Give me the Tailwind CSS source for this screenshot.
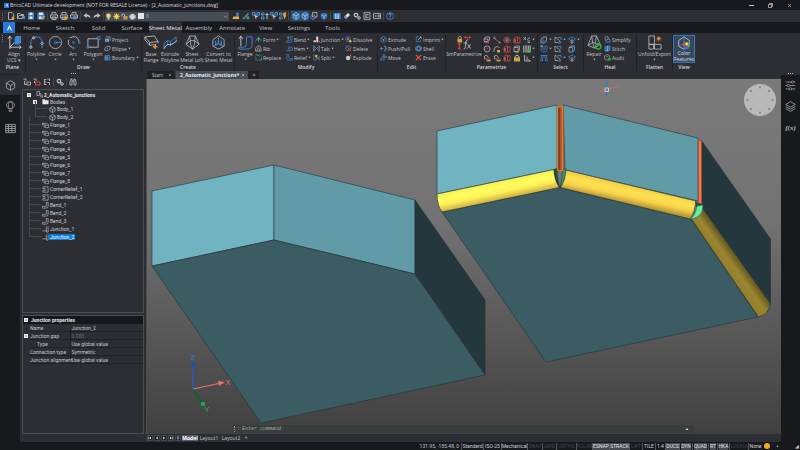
<!DOCTYPE html>
<html lang="en">
<head>
    <meta charset="UTF-8">
    <meta name="viewport" content="width=device-width, initial-scale=1.0">
    <title>BricsCAD Ultimate development</title>
    <script src="https://cdn.jsdelivr.net/npm/@tailwindcss/browser@4"></script>
</head>
<body class="h-screen flex flex-col overflow-hidden bg-[#17191d] text-[#c4c6c9] text-[5px] leading-[6px] font-['Open_Sans',sans-serif] whitespace-nowrap">

    <!-- Icon sprite -->
    <svg class="hidden" fill="none" stroke="currentColor">
        <symbol id="caret" viewBox="0 0 8 8"><path d="M1 2h6L4 6z" fill="currentColor" stroke="none"/></symbol>
        <symbol id="x" viewBox="0 0 16 16"><path d="M3 3l10 10M13 3L3 13" stroke-width="2"/></symbol>
        <symbol id="plus" viewBox="0 0 16 16"><path d="M8 2v12M2 8h12" stroke-width="2"/></symbol>
        <symbol id="logo" viewBox="0 0 16 16"><path d="M8 2l6 12H11L8 8 5 14H2z" fill="#fff" stroke="none"/></symbol>
        <symbol id="new" viewBox="0 0 16 16"><path d="M3 1h7l3 3v11H3z" stroke-width="1.6"/><circle cx="12" cy="12" r="3" fill="#e6a53a" stroke="none"/></symbol>
        <symbol id="open" viewBox="0 0 16 16"><path d="M1 13V3h5l2 2h5v3M1 13l3-6h8l-2 6z" stroke-width="1.6"/><path d="M11 8h5v6h-5z" fill="#4a90d9" stroke="none"/></symbol>
        <symbol id="save" viewBox="0 0 16 16"><path d="M2 1h12v14H2z" fill="#3f86d0" stroke="none"/><path d="M5 1h6v5H5zM5 9h6v5H5z" fill="#dde3ea" stroke="none"/></symbol>
        <symbol id="saveas" viewBox="0 0 16 16"><path d="M1 1h14v14H1z" fill="#3f86d0" stroke="none"/><path d="M4 1h8v5H4zM4 9h5v5H4z" fill="#dde3ea" stroke="none"/><path d="M9 15l6-7" stroke="#e6a53a" stroke-width="3"/></symbol>
        <symbol id="print" viewBox="0 0 16 16"><path d="M4 6V1h8v5M1 6h14v6H1zM4 10h8v5H4z" stroke-width="1.6"/></symbol>
        <symbol id="printo" viewBox="0 0 16 16"><path d="M4 6V1h8v5M1 6h14v6H1zM4 10h8v5H4z" stroke-width="1.6"/><path d="M9 9h6v6H9z" fill="#e6a53a" stroke="none"/></symbol>
        <symbol id="printb" viewBox="0 0 16 16"><path d="M4 6V1h8v5M1 6h14v6H1z" stroke-width="1.6"/><circle cx="10" cy="11" r="4" fill="#4a90d9" stroke="none"/></symbol>
        <symbol id="undo" viewBox="0 0 16 16"><path d="M1 7l6-5v3c5 0 8 3 8 8-2-3-4-4-8-4v3z" fill="currentColor" stroke="none"/></symbol>
        <symbol id="redo" viewBox="0 0 16 16"><path d="M15 7L9 2v3c-5 0-8 3-8 8 2-3 4-4 8-4v3z" fill="currentColor" stroke="none"/></symbol>
        <symbol id="bulb" viewBox="0 0 16 16"><circle cx="8" cy="6" r="5" fill="#ffd95e" stroke="none"/><path d="M6 10h4v5H6z" fill="#d8d8d8" stroke="none"/></symbol>
        <symbol id="sun" viewBox="0 0 16 16"><path d="M8 0v16M0 8h16M2 2l12 12M14 2L2 14" stroke="#ffc93c" stroke-width="1.5"/><circle cx="8" cy="8" r="5" fill="#ffd23f" stroke="none"/></symbol>
        <symbol id="unlock" viewBox="0 0 16 16"><path d="M2 8V4q3-4 6 0v4" stroke-width="2"/><path d="M5 7h10v8H5z" fill="#c69550" stroke="none"/></symbol>
        <symbol id="printfill" viewBox="0 0 16 16"><path d="M4 2h8v3h3v7h-3v3H4v-3H1V5h3z" fill="#d0d3d6" stroke="none"/></symbol>
        <symbol id="lock" viewBox="0 0 16 16"><path d="M4 8V5q4-6 8 0v3" stroke-width="2"/><path d="M2 7h12v8H2z" fill="#d1a43f" stroke="none"/></symbol>
        <symbol id="chev" viewBox="0 0 16 16"><path d="M3 5l5 6 5-6" stroke-width="1.5"/></symbol>
        <symbol id="brush" viewBox="0 0 16 16"><path d="M9 1h4v8H9z" fill="#4a90d9" stroke="none"/><path d="M3 9h11v5H1z" fill="#e8b04a" stroke="none"/></symbol>
        <symbol id="pick" viewBox="0 0 16 16"><path d="M2 14L13 3" stroke="#4a90d9" stroke-width="3"/><path d="M12 8v7M8 12h7" stroke="#5cb85c" stroke-width="2"/></symbol>
        <symbol id="sel" viewBox="0 0 16 16"><path d="M1 1h5v5H1zM10 1h5v5h-5z" stroke="#4a90d9" stroke-width="2"/><path d="M4 5l9 4-4 1-1 5z" fill="currentColor" stroke="none"/></symbol>
        <symbol id="sel2" viewBox="0 0 16 16"><path d="M1 2h5v4H1zM1 10h5v4H1z" stroke="#4a90d9" stroke-width="2"/><path d="M12 2v12M9 5h6" stroke-width="2"/></symbol>
        <symbol id="sel3" viewBox="0 0 16 16"><path d="M1 2h5v4H1zM1 10h5v4H1z" stroke="#4a90d9" stroke-width="2"/><path d="M9 1h6l-2 6h2l-5 8v-6H8z" fill="#f0a830" stroke="none"/></symbol>
        <symbol id="cube" viewBox="0 0 16 16"><path d="M8 1l6 3.5v7L8 15l-6-3.5v-7zM2 4.5L8 8l6-3.5M8 8v7" stroke-width="1.3"/></symbol>
        <symbol id="cubeb" viewBox="0 0 16 16"><path d="M8 1l6 3.5v7L8 15l-6-3.5v-7z" fill="#2e6fb7" stroke="#8fbfe8" stroke-width="1.3"/><path d="M2 4.5L8 8l6-3.5M8 8v7" stroke="#cfe3f5" stroke-width="1.3"/></symbol>
        <symbol id="cubes" viewBox="0 0 16 16"><path d="M5 1h9v9H5z" stroke-width="1.5"/><circle cx="6" cy="10" r="4.5" stroke="#4a90d9" stroke-width="2"/></symbol>
        <symbol id="sphere" viewBox="0 0 16 16"><circle cx="8" cy="8" r="6.5" fill="#2e6fb7" stroke="none"/><path d="M2 5l6 4 6-4M8 9v6" stroke-width="1.5"/></symbol>
        <symbol id="cols" viewBox="0 0 16 16"><path d="M1 2h14v12H1z" fill="#3f86d0" stroke="none"/><path d="M5 4v10M8 4v10M11 4v10" stroke="#dde3ea" stroke-width="1.3"/></symbol>
        <symbol id="eraser" viewBox="0 0 16 16"><path d="M2 10l8-8 4 4-8 8z" fill="#d8e2ee" stroke="none"/><path d="M2 10l3-3 4 4-3 3z" fill="#4a90d9" stroke="none"/></symbol>
        <symbol id="gear" viewBox="0 0 16 16"><circle cx="6" cy="6" r="3.5" stroke-width="2.5"/><circle cx="12" cy="12" r="2.5" stroke-width="2"/></symbol>
        <symbol id="list" viewBox="0 0 16 16"><path d="M2 1h12v14H2z" stroke-width="1.5"/><path d="M4 5h8M4 8h5M4 11h8" stroke-width="1.5"/></symbol>
        <symbol id="term" viewBox="0 0 16 16"><path d="M1 3h14v10H1z" stroke-width="1.5"/><path d="M4 6l3 2-3 2M10 6h3v4h-3z" stroke-width="1.3"/></symbol>
        <symbol id="help" viewBox="0 0 16 16"><circle cx="8" cy="8" r="7" stroke="#3f86d0" stroke-width="1.6"/><path d="M5.500 6q0-3 2.500-3t2.500 2.500q0 1-2.500 3v1M8 11v2" stroke="#7db5ec" stroke-width="1.6"/></symbol>
        <symbol id="ucs" viewBox="0 0 16 16"><path d="M3 15V2M1 4l2-3 2 3M3 13h12M13 11l2 2-2 2M3 13l5-5" stroke-width="1"/><path d="M8 3l2-2h5v7l-2 2H8z" fill="#3f86d0" stroke="none"/></symbol>
        <symbol id="polyline" viewBox="0 0 16 16"><path d="M2 13V7q1-5 6-5 6 0 6 6" stroke="#3f86d0" stroke-width="1"/><circle cx="2" cy="13" r="1.200"/><circle cx="5" cy="3" r="1.200"/><circle cx="14" cy="9" r="1.200"/><path d="M14 10v4" stroke="#3f86d0"/></symbol>
        <symbol id="circle" viewBox="0 0 16 16"><circle cx="8" cy="8" r="6.500" stroke-width=".8"/><circle cx="8" cy="8" r="1.300" stroke="#3f86d0"/><path d="M9 8h6" stroke="#3f86d0"/></symbol>
        <symbol id="arc" viewBox="0 0 16 16"><path d="M4 3q8-4 10 4M3 5q-2 6 4 8.500" stroke-width=".9"/><circle cx="8" cy="8" r="1" stroke="#3f86d0"/><circle cx="14" cy="8" r="1" stroke="#3f86d0"/><circle cx="8" cy="14" r="1" stroke="#3f86d0"/></symbol>
        <symbol id="polygon" viewBox="0 0 16 16"><path d="M2 4h11v9H2z" stroke-width=".9"/><path d="M12 2h3v3h-3zM1 12h2v2H1z" stroke="#3f86d0"/></symbol>
        <symbol id="project" viewBox="0 0 16 16"><path d="M2 5h10v9H2z" fill="#2e6fb7" stroke="none"/><path d="M4 2h10v9M4 8h6v4H4z" stroke-width="1.4"/></symbol>
        <symbol id="ellipse" viewBox="0 0 16 16"><ellipse cx="8" cy="8" rx="7" ry="4.500" stroke-width="1.4" transform="rotate(-30 8 8)"/><circle cx="8" cy="8" r="1.300" fill="#3f86d0" stroke="#3f86d0"/></symbol>
        <symbol id="boundary" viewBox="0 0 16 16"><path d="M2 4l9-2 3 4v8H2z" fill="#2a4e78" stroke="#5d9fe0" stroke-width="1.4"/><circle cx="6" cy="9" r="2.500" stroke-width="1.3"/></symbol>
        <symbol id="flangebase" viewBox="0 0 16 16"><path d="M1 2l10-1 4 6-9 1zM1 2v3l5 6v-3M6 11l7-1M15 7v2" stroke-width=".9"/><path d="M12 10v5M9.500 12.500h5" stroke="#e88a3a" stroke-width="1.600"/></symbol>
        <symbol id="extrudepl" viewBox="0 0 16 16"><path d="M1 9l4-3 3 1 6-5v5l-6 4-3-1-4 4zM5 6v5M8 7v5" stroke="#3f86d0"/><path d="M1 15q2-5 5-5 3 1 9-4" stroke-width=".9"/></symbol>
        <symbol id="loft" viewBox="0 0 16 16"><path d="M5 1h6l4 9-7 5-7-5zM5 1l1 9 2 5 2-5 1-9M1 10l5-4 4 0 5 4" stroke-width=".8"/></symbol>
        <symbol id="convert" viewBox="0 0 16 16"><path d="M8 1l6 4v7l-6 3-6-3V5z" stroke-width=".8"/><path d="M8 3v6l-5 3M8 9l5 3M5 6v5M11 6v5" stroke="#3f86d0" stroke-width="1.300"/></symbol>
        <symbol id="flange" viewBox="0 0 16 16"><path d="M3 12V2M1 4l2-3 2 3" stroke-width="1"/><path d="M1 13h5q3 0 3-4V2h6v8q0 5-6 5H1z" stroke="#3f86d0"/></symbol>
        <symbol id="form" viewBox="0 0 16 16"><path d="M1 13q2-8 7-8 5 0 7 6" stroke="#3f86d0" stroke-width="1.500"/><path d="M8 13V5M5 8l3-4 3 4" stroke="#43b649" stroke-width="2.500"/></symbol>
        <symbol id="rib" viewBox="0 0 16 16"><path d="M1 14V8q3-6 7-6 5 0 6 6v6zM5 14V8q3-3 5 0v6" stroke-width="1.400"/></symbol>
        <symbol id="replace" viewBox="0 0 16 16"><path d="M1 2h6l3 4M9 14h6V8" stroke="#43b649" stroke-width="2"/><path d="M2 6v8h6M10 2h4v3" stroke="#3f86d0" stroke-width="1.500"/></symbol>
        <symbol id="bend" viewBox="0 0 16 16"><path d="M1 11h7q2 0 2-3V1h4v9q0 5-5 5H1z" stroke="#3f86d0" stroke-width="1.500"/><path d="M3 3h4M5 1v7" stroke-width="1.200"/></symbol>
        <symbol id="hem" viewBox="0 0 16 16"><path d="M1 13h11q3-1 3-4 0-4-4-4H6v4h5" stroke="#3f86d0" stroke-width="1.800"/></symbol>
        <symbol id="relief" viewBox="0 0 16 16"><path d="M2 1v13h13v-4H9q-3 0-3-4V1z" stroke="#3f86d0" stroke-width="1.600"/></symbol>
        <symbol id="junction" viewBox="0 0 16 16"><path d="M7 1h5v13H8z" fill="#d8d8d8" stroke="none"/><path d="M1 10h6v4H1z" fill="#d8d8d8" stroke="none"/><path d="M12 11h4v3h-4z" fill="#e04545" stroke="none"/></symbol>
        <symbol id="tab" viewBox="0 0 16 16"><path d="M2 1v14M14 1v14" stroke-width="1.500"/><path d="M4 4l8 8M12 4l-8 8" stroke="#3f86d0" stroke-width="2"/></symbol>
        <symbol id="split" viewBox="0 0 16 16"><path d="M2 1v14M14 5v10" stroke="#3f86d0" stroke-width="1.800"/><path d="M5 2h5v6H5z" fill="#e8b04a" stroke="none"/><path d="M5 15l6-6 2 2" stroke-width="1.500"/></symbol>
        <symbol id="dissolve" viewBox="0 0 16 16"><circle cx="7" cy="7" r="5.500" stroke="#3f86d0" stroke-width="1.600"/><path d="M4 7h6M7 4v6" stroke-width="1.400"/><circle cx="12" cy="12" r="3" fill="#e8b04a" stroke="none"/></symbol>
        <symbol id="delete" viewBox="0 0 16 16"><circle cx="7" cy="7" r="5.500" stroke="#3f86d0" stroke-width="1.600"/><path d="M5 5l9 9M14 6l-8 8" stroke="#e04545" stroke-width="2.200"/></symbol>
        <symbol id="explode" viewBox="0 0 16 16"><circle cx="7" cy="9" r="5" fill="#c8c8c8" stroke="none"/><path d="M11 5l3-4M12 7h3" stroke="#e8b04a" stroke-width="1.600"/></symbol>
        <symbol id="extrude" viewBox="0 0 16 16"><path d="M8 1l6 3.500v7L8 15l-6-3.500v-7z" stroke="#3f86d0" stroke-width="1.800"/><path d="M5 6l3 2 3-2M8 8v4" stroke-width="1.300"/></symbol>
        <symbol id="push" viewBox="0 0 16 16"><path d="M1 8h6M4 5L1 8l3 3M9 3h4v10H9M13 6l2 2-2 2" stroke="#5d9fe0" stroke-width="1.800"/></symbol>
        <symbol id="move" viewBox="0 0 16 16"><path d="M9 1v14M3 7h12M7 3l2-2 2 2M13 5l2 2-2 2" stroke="#5d9fe0" stroke-width="1.600"/><path d="M1 10h4v5H1z" fill="#3f86d0" stroke="none"/></symbol>
        <symbol id="imprint" viewBox="0 0 16 16"><path d="M8 2H3v11h9V8" stroke="#3f86d0" stroke-width="1.700"/><path d="M7 9l7-7M11 2h3v3" stroke-width="1.600"/></symbol>
        <symbol id="shell" viewBox="0 0 16 16"><path d="M8 1l7 4v6l-7 4-7-4V5z" fill="#2e6fb7" stroke="#5d9fe0"/><path d="M8 4l4 2.500v3L8 12 4 9.500v-3z" fill="#2c2e33"/></symbol>
        <symbol id="erase" viewBox="0 0 16 16"><path d="M2 2l12 12M14 2L2 14" stroke="#e2553a" stroke-width="3"/></symbol>
        <symbol id="smparam" viewBox="0 0 32 32"><path d="M3 8V5q3-6 6 0v3" stroke-width="1.600"/><path d="M1 8h10v8H1z" fill="#d1a43f" stroke="none"/><path d="M5 18v12M2 21l3-4 3 4M2 27l3 4 3-4M16 5h13M19 2l-3 3 3 3M26 2l3 3-3 3" stroke="#e04545" stroke-width="2"/><path d="M24 10q-5-1-5 6l-1 9q-1 6-4 5M14 17h8M23 20l6 9M29 20l-7 9" stroke-width="1.800"/></symbol>
        <symbol id="p1" viewBox="0 0 16 16"><path d="M2 6l3-4h8v6l-3 3H2zM2 6h8v5" stroke-width="1.400"/><path d="M3 14l9-1" stroke="#e04545" stroke-width="2.200"/></symbol>
        <symbol id="p2" viewBox="0 0 16 16"><path d="M2 4l11 9" stroke="#e04545" stroke-width="1.800"/><circle cx="3" cy="4" r="1.500"/><circle cx="13" cy="13" r="1.500"/></symbol>
        <symbol id="p3" viewBox="0 0 16 16"><ellipse cx="8" cy="8" rx="6.500" ry="5.500" stroke="#e04545" stroke-width="1.600"/><circle cx="8" cy="8" r="2.500" stroke-width="1.300"/></symbol>
        <symbol id="p4" viewBox="0 0 16 16"><path d="M2 14V5l4-3h3v12zM9 5l5-2v11H9" stroke="#e04545" stroke-width="1.600"/><path d="M4 6v6" stroke-width="1.500"/></symbol>
        <symbol id="p5" viewBox="0 0 16 16"><path d="M1 2l5 6M6 2L1 8M8 7l6-4M9 10h5M9 13h5" stroke-width="1.400"/></symbol>
        <symbol id="p6" viewBox="0 0 16 16"><circle cx="8" cy="8" r="6" stroke-width="1.400"/><path d="M5 10l6-5" stroke="#e04545" stroke-width="1.600"/></symbol>
        <symbol id="p7" viewBox="0 0 16 16"><path d="M2 14V8q2-6 8-5l3 3" stroke-width="1.400"/><path d="M8 10h6v5H8z" fill="#d1a43f" stroke="none"/></symbol>
        <symbol id="p8" viewBox="0 0 16 16"><path d="M2 5l3-3h8v8l-3 3H2zM2 5h8v8" stroke-width="1.400"/><path d="M4 14h8" stroke="#e8b04a" stroke-width="2"/></symbol>
        <symbol id="p9" viewBox="0 0 16 16"><path d="M1 2h14v12H1zM1 6h14M1 10h14M6 2v12M11 2v12" stroke-width="1.300"/><path d="M9 9h6v6H9z" fill="#43b649" stroke="none"/></symbol>
        <symbol id="p10" viewBox="0 0 16 16"><path d="M3 11V4l4-2 5 7" stroke-width="1.400"/><path d="M4 9l5 1" stroke="#e04545" stroke-width="2"/><path d="M7 13h8" stroke="#d1a43f" stroke-width="3.500"/></symbol>
        <symbol id="p11" viewBox="0 0 16 16"><path d="M3 2v12h11M8 5v9" stroke-width="1.600"/><path d="M8 10h4v4H8z" fill="#3f86d0" stroke="none"/><path d="M12 12h3v3h-3z" fill="#d1a43f" stroke="none"/></symbol>
        <symbol id="s1" viewBox="0 0 16 16"><path d="M2 14V6l4-4h7v8l-4 4z" stroke-width="1.300"/><path d="M2 14l4-4V2M6 10h7" stroke="#3f86d0" stroke-width="1.500"/></symbol>
        <symbol id="s2" viewBox="0 0 16 16"><path d="M2 2v7q0 5 6 5t6-5V2h-4v7H6V2z" stroke="#3f86d0" stroke-width="1.400"/><path d="M1 2h5" stroke-width="1.500"/></symbol>
        <symbol id="s3" viewBox="0 0 16 16"><path d="M2 14V8q0-5 6-5t6 5v6h-3V9q0-3-3-3T5 9v5zM1 3h14" stroke="#3f86d0" stroke-width="1.500"/></symbol>
        <symbol id="s4" viewBox="0 0 16 16"><path d="M2 2v11h6M2 2l10 8v4" stroke-width="1.300"/><path d="M7 3h7v5M8 14h6" stroke="#3f86d0" stroke-width="1.800"/></symbol>
        <symbol id="s5" viewBox="0 0 16 16"><path d="M1 6l7-4 7 4-7 5z" stroke="#3f86d0" stroke-width="1.600"/><path d="M8 6v9M4 11l4 4 4-4" stroke-width="1.300"/></symbol>
        <symbol id="s6" viewBox="0 0 16 16"><path d="M2 5l4-3h7v8l-4 4H2zM2 5h7v9" stroke-width="1.300"/><path d="M9 5l4-3v8l-4 4z" stroke="#3f86d0" stroke-width="1.600"/></symbol>
        <symbol id="repair" viewBox="0 0 16 16"><path d="M5 1h5l4 9-6 4-7-3zM5 1l1 7-5 3M6 8l8 2M6 8l2 6M10 1l-1 7" stroke-width=".8"/><circle cx="12" cy="12" r="2.800" stroke="#2fae3a" stroke-width="1.600"/></symbol>
        <symbol id="simplify" viewBox="0 0 16 16"><circle cx="6" cy="5" r="4" stroke-width="1.300"/><path d="M4 9v5h10V8h-4" stroke="#5d9fe0" stroke-width="1.500"/></symbol>
        <symbol id="stitch" viewBox="0 0 16 16"><path d="M2 4l4-2h8v10l-4 2H2z" fill="#2e6fb7" stroke="#5d9fe0"/><path d="M8 3v11" stroke-dasharray="2 1" stroke-width="2"/></symbol>
        <symbol id="audit" viewBox="0 0 16 16"><path d="M7 1l6 3v7l-6 3-6-3V4z" stroke-width="1.200"/><path d="M4 5l3 2 3-2" stroke-width="1.200"/><circle cx="12" cy="12" r="3.500" fill="#2fae3a" stroke="none"/></symbol>
        <symbol id="unfold" viewBox="0 0 16 16"><path d="M2 1h6v9H2zM2 10h5v5H2zM8 10h7v5H8z" stroke-width=".8"/><circle cx="12.500" cy="4" r="1.500" fill="#e88a3a" stroke="none"/><path d="M12.500 1v6M9.500 4h6M10.500 2l4 4M14.500 2l-4 4" stroke="#e88a3a" stroke-width=".6"/></symbol>
        <symbol id="colorf" viewBox="0 0 16 16"><path d="M8 1l6 4v7l-6 3-6-3V5z" stroke-width=".8"/><path d="M8 2v6l-5 4" stroke="#4a90d9" stroke-width="1"/><path d="M11 11V7a4 4 0 013.500 6z" fill="#3fae49" stroke="none"/><path d="M11 11l3.500 2a4 4 0 01-7 0z" fill="#3c6fe0" stroke="none"/><path d="M11 11l-3.500 2A4 4 0 0111 7z" fill="#e8453a" stroke="none"/><circle cx="11" cy="9" r="1.500" fill="#ffe14d" stroke="none"/></symbol>
        <symbol id="t1" viewBox="0 0 16 16"><path d="M1 2h5v4M3 6v7h5M8 8h7v6H8z" stroke-width="1.600"/></symbol>
        <symbol id="t2" viewBox="0 0 16 16"><path d="M1 2h5v4M3 6v4" stroke-width="1.600"/><path d="M5 8h9v6H5z" stroke="#e04545" stroke-width="1.800"/></symbol>
        <symbol id="t3" viewBox="0 0 16 16"><path d="M3 2v12M3 3h4M3 8h4M3 13h4M9 2h4v4M9 9h4v5" stroke-width="1.600"/></symbol>
        <symbol id="binoc" viewBox="0 0 16 16"><path d="M2 14V7l2-5h2v12zM14 14V7l-2-5h-2v12zM6 6h4" stroke-width="1.600"/></symbol>
        <symbol id="balloon" viewBox="0 0 16 16"><path d="M5.500 11C0 7 2 1 8 1s8 6 2.500 10zM5.500 11C4 4 6 1 8 1s4 3 2.500 10M6 13h4v2H6z" stroke-width="1.100"/></symbol>
        <symbol id="grid" viewBox="0 0 16 16"><path d="M1 2h14v12H1zM1 5h14M1 8h14M1 11h14M5 2v12M10 2v12" stroke-width="1.200"/></symbol>
        <symbol id="folder" viewBox="0 0 16 16"><path d="M1 3h5l2 2h7v9H1z" fill="#e8e8e8" stroke="none"/></symbol>
        <symbol id="asm" viewBox="0 0 16 16"><path d="M2 1h6v9H2zM8 6h3v8h4v-4h-2" stroke-width="1.200"/></symbol>
        <symbol id="fl" viewBox="0 0 16 16"><path d="M1 3h9l5 3v7H7V7L1 3zM7 7h8M1 3v4l6 5" stroke-width="1.300"/></symbol>
        <symbol id="cr" viewBox="0 0 16 16"><path d="M2 2h12v12H2v-4h5V6H2z" stroke-width="1.300"/></symbol>
        <symbol id="bd" viewBox="0 0 16 16"><path d="M1 10h6q3 0 3-3V1h4v8q0 5-5 5H1z" stroke-width="1.300"/></symbol>
        <symbol id="jn" viewBox="0 0 16 16"><path d="M10 1v13M14 1v13h-4M1 11h9" stroke-width="1.300"/></symbol>
        <symbol id="sliders" viewBox="0 0 16 16"><path d="M1 3h14M1 8h14M1 13h14" stroke-width="1.200"/><circle cx="11" cy="3" r="1.800" fill="#17191d"/><circle cx="5" cy="8" r="1.800" fill="#17191d"/><circle cx="8" cy="13" r="1.800" fill="#17191d"/></symbol>
        <symbol id="layers" viewBox="0 0 16 16"><path d="M8 1l7 4-7 4-7-4zM1 8l7 4 7-4M1 11l7 4 7-4" stroke-width="1.200"/></symbol>
        <symbol id="first" viewBox="0 0 16 16"><path d="M12 2v12L5 8zM2 2h2v12H2z" fill="currentColor" stroke="none"/></symbol>
        <symbol id="prev" viewBox="0 0 16 16"><path d="M11 2v12L4 8z" fill="currentColor" stroke="none"/></symbol>
        <symbol id="next" viewBox="0 0 16 16"><path d="M5 2v12l7-6z" fill="currentColor" stroke="none"/></symbol>
        <symbol id="last" viewBox="0 0 16 16"><path d="M4 2v12l7-6zM12 2h2v12h-2z" fill="currentColor" stroke="none"/></symbol>
        <symbol id="menu" viewBox="0 0 16 16"><path d="M3 3h10M3 6h10M3 9h10M3 12h10" stroke-width="1.500"/></symbol>
    </svg>

    <!-- Title bar -->
    <header class="h-[10px] shrink-0 flex items-center pl-1 pr-2">
        <div class="size-[5px] bg-[#2779e2] flex items-center justify-center"><svg class="size-1"><use href="#logo"/></svg></div>
        <h1 class="ml-px flex-1 text-[#dcdde0]">BricsCAD Ultimate development (NOT FOR RESALE License) - [2_Automatic_junctions.dwg]</h1>
        <div class="flex gap-[14px]">
            <button aria-label="Minimize" class="size-[5px] flex items-center"><span class="w-full h-px bg-[#c4c6c9]"></span></button>
            <button aria-label="Restore" class="size-[5px]"><svg class="size-full" viewBox="0 0 10 10" fill="none" stroke="currentColor" stroke-width="1.500"><path d="M1 3h6v6H1zM3 3V1h6v6H7"/></svg></button>
            <button aria-label="Close" class="size-[5px]"><svg class="size-full stroke-current"><use href="#x"/></svg></button>
        </div>
    </header>

    <!-- Quick access toolbar -->
    <div id="quick" class="h-3 shrink-0 flex items-center bg-[#2c2e33]"></div>

    <!-- Ribbon tabs -->
    <nav class="h-[11px] shrink-0 flex items-stretch pl-[3px] text-[6px]">
        <button aria-label="Application menu" class="w-3 bg-[#2779e2] flex items-center justify-center"><svg class="size-[7px]"><use href="#logo"/></svg></button>
        <div id="tabs" class="w-[334px] flex"></div>
    </nav>

    <!-- Ribbon -->
    <div id="ribbon" class="h-[38px] shrink-0 flex bg-[#2c2e33] pt-[2px]"></div>

    <main class="flex-1 min-h-0 flex bg-[#2c2e33]">
        <!-- Left rail -->
        <aside class="w-5 shrink-0 bg-[#17191d] flex flex-col">
            <div class="h-1 bg-[#2c2e33] border-b border-[#202226]"></div>
            <button aria-label="Mechanical browser" class="h-5 bg-[#2c2e33] flex items-center justify-center"><svg class="size-[11px] stroke-[#a3a5a8] fill-none"><use href="#cube"/></svg></button>
            <button aria-label="Tips" class="h-[23px] flex items-center justify-center"><svg class="size-[11px] stroke-[#a3a5a8] fill-none"><use href="#balloon"/></svg></button>
            <button aria-label="Report" class="h-5 flex items-center justify-center"><svg class="size-[11px] stroke-[#a3a5a8] fill-none"><use href="#grid"/></svg></button>
        </aside>

        <!-- Structure panel -->
        <section class="w-[126px] shrink-0 flex flex-col px-[2px] pb-2 font-['Roboto',sans-serif]">
            <div class="h-1 flex justify-center items-center gap-px pr-5"><i class="size-px bg-[#b8b8b8]"></i><i class="size-px bg-[#b8b8b8]"></i><i class="size-px bg-[#b8b8b8]"></i></div>
            <div id="treeTools" class="h-[14px] flex items-center"></div>
            <ul id="tree" class="h-[224px] border border-[#4b4d51] pt-px pl-[4px]"></ul>
            <div class="mt-[2px] flex-1 border border-[#4b4d51]">
                <table class="w-full table-fixed">
                    <colgroup><col class="w-[7px]"><col class="w-10"><col></colgroup>
                    <thead><tr class="h-2 bg-[#15171a] text-[#e6e6e6]"><th colspan="3" class="text-left font-bold p-0"><span class="flex items-center gap-[3px] pl-px"><svg class="size-1" viewBox="0 0 8 8"><path d="M0 0h8v8H0z" fill="#eee"/><path d="M2 4h4" stroke="#333"/></svg>Junction properties</span></th></tr></thead>
                    <tbody id="props"></tbody>
                </table>
            </div>
        </section>

        <!-- Document area -->
        <section class="flex-1 min-w-0 flex flex-col">
            <div class="h-2 flex items-stretch pl-px">
                <button class="w-[29px] bg-[#202226] border-r border-[#3a3c40] flex items-center justify-between pl-[5px] pr-[3px]">Start<svg class="size-1 stroke-current"><use href="#x"/></svg></button>
                <button class="w-[72px] bg-[#454d57] text-[#e8eaed] font-bold flex items-center justify-between pl-1 pr-[3px]">2_Automatic_junctions*<svg class="size-1 stroke-current"><use href="#x"/></svg></button>
                <button aria-label="New drawing" class="w-[11px] bg-[#202226] flex items-center justify-center"><svg class="size-1 stroke-current"><use href="#plus"/></svg></button>
            </div>
            <div class="flex-1 min-h-0 relative border-l border-[#4b4d51]">
                <svg class="absolute inset-0 size-full" viewBox="147 79 634 355" preserveAspectRatio="xMidYMid slice">
                    <defs>
                        <linearGradient id="bg" x2="0" y2="1"><stop offset="0" stop-color="#7a7a7a"/><stop offset=".4" stop-color="#727272"/><stop offset="1" stop-color="#404040"/></linearGradient>
                        <linearGradient id="y1" gradientUnits="userSpaceOnUse" x1="498" y1="181" x2="502" y2="200"><stop offset="0" stop-color="#f8ec54"/><stop offset=".3" stop-color="#ffff5c"/><stop offset=".6" stop-color="#fff059"/><stop offset="1" stop-color="#c9aa40"/></linearGradient>
                        <linearGradient id="y2" gradientUnits="userSpaceOnUse" x1="630" y1="185" x2="626" y2="203"><stop offset="0" stop-color="#efcb47"/><stop offset=".3" stop-color="#ffe14f"/><stop offset=".65" stop-color="#f8d44b"/><stop offset="1" stop-color="#b89738"/></linearGradient>
                        <linearGradient id="y3" gradientUnits="userSpaceOnUse" x1="724" y1="268" x2="738" y2="258"><stop offset="0" stop-color="#927f2c"/><stop offset=".5" stop-color="#9b862e"/><stop offset="1" stop-color="#625625"/></linearGradient>
                    </defs>
                    <path fill="url(#bg)" d="M147 79h634v355H147z"/>
                    <!-- Solid without features -->
                    <g stroke="#243438" stroke-width=".6">
                        <path fill="#71b4c1" d="M152 191L274 165V240L152 266z"/>
                        <path fill="#629ba8" d="M274 165L415 200V274L274 240z"/>
                        <path fill="#24373c" d="M415 200L485 300V375L415 274z"/>
                        <path fill="#3c5c63" d="M152 266L274 240 415 274 485 375 261 423z"/>
                    </g>
                    <!-- Sheet metal part -->
                    <g stroke="#243438" stroke-width=".6">
                        <path fill="#3c5c63" d="M442 212L559 187.500 691 219 758 317 546 362z"/>
                        <path fill="#24373c" d="M701 140L770.500 239V304L702 209z"/>
                        <path fill="#71b4c1" d="M437 131L557 105V169L437 194z"/>
                        <path fill="#629ba8" d="M563 105L698 138V201L565 170z"/>
                        <path fill="url(#y1)" d="M437 194L554 169.500Q555 181 559.500 187.500L442 212Q437 205 437 194z"/>
                        <path fill="url(#y2)" d="M565.500 170L696 201Q695 211 690.500 219L560.500 187.500Q565 180 565.500 170z"/>
                        <path fill="url(#y3)" d="M702.500 208L770.500 303.500Q769 314 758.500 317L691.500 219Q700 217 702.500 208z"/>
                    </g>
                    <path fill="#747474" d="M556 170h8l-2 14-2.500 3z"/>
                    <path fill="#24503f" stroke="#14342a" stroke-width=".5" d="M554 169h4v2l-1 2q1 9 2.500 14Q554 180 554 169z"/>
                    <path fill="#3f8f70" stroke="#14342a" stroke-width=".5" d="M562 169h4q0 11-6 18.500 3-9 2-16z"/>
                    <path fill="#b5532f" d="M557 106h6.500v65H557z"/>
                    <path fill="none" stroke="#f08020" d="M557.500 106v64M562.500 106v64M557 106l3 1 3-1M557 170l3 1 3-1"/>
                    <path stroke="#4a2a20" stroke-width=".9" d="M559 108v62"/>
                    <path fill="#fb7445" stroke="#a34428" stroke-width=".5" d="M698.500 140.500h3V204l-3-1z"/>
                    <path fill="#24503f" d="M695 201l3 2 4 1v2l-6 1z"/>
                    <path fill="#68eba2" stroke="#1d5c44" stroke-width=".5" d="M697 206l6-1q0 9-6 12-3 2-6.500 2 5-4 6.500-13z"/>
                    <!-- Cursor -->
                    <g fill="none"><path stroke="#c46a6a" d="M600 91l20-5"/><path stroke="#3a9463" d="M604 84l11 16"/><path stroke="#3b79b5" stroke-width="1.300" d="M606.500 80v16"/><path fill="#777" stroke="#dbe6ee" stroke-width=".8" d="M605 88h3.500v3.500H605z"/></g>
                    <!-- Look-from widget -->
                    <circle cx="760" cy="100" r="16" fill="#b9b9b9"/>
                    <g fill="#777"><circle cx="760" cy="87.500" r=".9"/><circle cx="769" cy="91" r=".9"/><circle cx="772.500" cy="100" r=".9"/><circle cx="769" cy="109" r=".9"/><circle cx="760" cy="112.500" r=".9"/><circle cx="751" cy="109" r=".9"/><circle cx="747.500" cy="100" r=".9"/><circle cx="751" cy="91" r=".9"/></g>
                    <!-- UCS icon -->
                    <g fill="none" stroke-width="1.200">
                        <path stroke="#0f5f34" stroke-width="1.500" d="M193 389l9 13"/><circle cx="203" cy="404" r="2.200" fill="#16a85c"/>
                        <path stroke="#e87474" d="M193 389l26-5.500"/><path fill="#e87474" d="M218 381l7 1-6 4z"/>
                        <path stroke="#1c63cf" d="M193 389v-22"/><path fill="#1552b5" d="M190.500 367l2.500-6 2.500 6z"/>
                    </g>
                    <g font-size="8" text-anchor="middle"><text x="193" y="360" fill="#2f78da">Z</text><text x="228" y="385" fill="#e87474">X</text><text x="207" y="412" fill="#22b86b">Y</text></g>
                </svg>
                <!-- Command line -->
                <div class="absolute left-[86px] right-[87px] bottom-px h-2 bg-[#393d3e] flex items-center gap-[2px] px-px font-['Liberation_Mono',monospace] italic">
                    <i class="w-px h-[6px] border-l border-dotted border-[#999]"></i>
                    <label for="cmd" class="text-[#9a9c9d]">:</label>
                    <input id="cmd" placeholder="Enter command" class="flex-1 min-w-0 outline-none placeholder:text-[#a6a8a9]">
                    <svg class="size-1 rotate-180 mr-1 text-[#dcdcdc]"><use href="#caret"/></svg>
                </div>
            </div>
            <div id="layouts" class="h-2 flex items-center pl-px bg-[#2c2e33]"></div>
        </section>

        <!-- Right rail -->
        <aside class="w-[19px] shrink-0 bg-[#17191d] flex flex-col">
            <div class="h-1 bg-[#2c2e33] flex justify-center items-center gap-px"><i class="size-px bg-[#b8b8b8]"></i><i class="size-px bg-[#b8b8b8]"></i><i class="size-px bg-[#b8b8b8]"></i></div>
            <button aria-label="Properties" class="h-[21px] flex items-center justify-center"><svg class="size-[11px] stroke-[#a3a5a8] fill-none"><use href="#sliders"/></svg></button>
            <button aria-label="Layers" class="h-[21px] flex items-center justify-center"><svg class="size-[11px] stroke-[#a3a5a8] fill-none"><use href="#layers"/></svg></button>
            <button class="h-[21px] font-['Liberation_Serif',serif] italic font-bold text-[7px] text-[#b8babd]">f(x)</button>
        </aside>
    </main>

    <!-- Status bar -->
    <footer id="status" class="h-2 shrink-0 flex items-center justify-end pr-px font-['Roboto',sans-serif]"></footer>

    <script>
        const $ = id => document.getElementById(id);
        const ico = (id, cls = 'size-2') => `<svg class="${cls} shrink-0 fill-none stroke-current"><use href="#${id}"/></svg>`;
        const caret = '<svg class="size-[3px] shrink-0"><use href="#caret"/></svg>';
        const sep = '<i class="w-px h-2 mx-px bg-[#45484d]"></i>';
        const grip = '<i class="w-px h-[7px] mx-[2px] border-l border-dotted border-[#777]"></i>';

        // Quick access toolbar
        const quickBtn = id => `<button aria-label="${id}" class="w-[10px] flex justify-center">${ico(id)}</button>`;
        const quickOn = id => `<button aria-label="${id}" class="w-[9px] h-[10px] bg-[#2f4f70] flex items-center justify-center">${ico(id)}</button>`;
        const tight = id => `<button aria-label="${id}" class="w-[9px] flex justify-center">${ico(id)}</button>`;
        $('quick').innerHTML = grip + '<i class="w-px"></i>' +
            ['new', 'open', 'save', 'saveas'].map(quickBtn).join('') + sep +
            ['print', 'printo', 'printb'].map(quickBtn).join('') + sep +
            ['undo', 'redo'].map(quickBtn).join('') + sep +
            `<div class="w-[124px] h-[9px] mr-[2px] bg-[#454d57] flex items-center gap-px">
                ${ico('bulb', 'size-[7px]')}${ico('sun', 'size-[7px]')}${ico('unlock', 'size-[7px]')}${ico('printfill', 'size-[7px]')}
                <i class="size-[6px] ml-px bg-[#e4e4e4]"></i>
                <select aria-label="Layer" class="flex-1 appearance-none pl-px outline-none"><option>0</option></select>
                ${ico('chev', 'size-[5px] mr-px')}
            </div>` +
            ['brush', 'pick'].map(quickBtn).join('') + ['sel', 'sel2', 'sel', 'sel3'].map(tight).join('') + sep +
            '<i class="w-px"></i>' + quickOn('cubeb') + quickOn('cubeb') +
            ['cubes', 'sphere'].map(quickBtn).join('') + sep +
            ['cols', 'eraser', 'gear', 'list', 'term'].map(quickBtn).join('') + sep + quickBtn('help');

        // Ribbon tabs
        $('tabs').innerHTML = ['Home', 'Sketch', 'Solid', 'Surface', 'Sheet Metal', 'Assembly', 'Annotate', 'View', 'Settings', 'Tools']
            .map(t => `<button class="flex-1 basis-0 min-w-0 ${t === 'Sheet Metal' ? 'bg-[#2c2e33] text-[#e4e5e7]' : ''}">${t}</button>`).join('');

        // Ribbon pieces
        const big = (w, id, label, arrow = '', cls = 'size-[15px]') => `<button class="${w} shrink-0 h-7 flex flex-col items-center">${ico(id, cls)}<span class="mt-px text-center">${label}</span>${arrow}</button>`;
        const down = '<svg class="size-[3px] mt-px shrink-0"><use href="#caret"/></svg>';
        const col = (w, items) => `<div class="${w} shrink-0 flex flex-col">` +
            items.map(([id, t, a]) => `<button class="h-[9px] flex items-center gap-px">${ico(id, 'size-[7px]')}${t}${a ? caret : ''}</button>`).join('') + '</div>';
        const icons = (w, ids) => `<div class="${w} shrink-0 flex flex-col">` +
            ids.map(([id, a]) => `<button aria-label="${id}" class="h-[9px] flex items-center gap-px">${ico(id)}${a ? caret : ''}</button>`).join('') + '</div>';
        const group = (w, title, body) => `<section class="${w} shrink-0 border-r border-[#1f2125] flex flex-col"><div class="h-7 flex">${body}</div><h2 class="h-2 leading-2 text-center font-semibold text-[#d4d5d7]">${title}</h2></section>`;

        $('ribbon').innerHTML =
            group('w-[26px]', 'Plane', grip + big('w-[18px]', 'ucs', 'Align<br>UCS ▾')) +
            group('w-[116px]', 'Draw',
                big('w-5', 'polyline', 'Polyline', down) + big('w-[18px]', 'circle', 'Circle', down) +
                big('w-[18px]', 'arc', 'Arc', down) + big('w-[22px]', 'polygon', 'Polygon', down) +
                col('w-9', [['project', 'Project'], ['ellipse', 'Ellipse', 1], ['boundary', 'Boundary', 1]])) +
            group('w-[93px]', 'Create',
                big('w-[18px]', 'flangebase', 'Base<br>Flange') + big('w-5', 'extrudepl', 'Extrude<br>Polyline') +
                big('w-6', 'loft', 'Sheet<br>Metal Loft') + big('w-[29px]', 'convert', 'Convert to<br>Sheet Metal')) +
            group('w-[143px]', 'Modify',
                big('w-5', 'flange', 'Flange', down) +
                col('w-[31px]', [['form', 'Form', 1], ['rib', 'Rib'], ['replace', 'Replace']]) +
                col('w-[27px]', [['bend', 'Bend', 1], ['hem', 'Hem', 1], ['relief', 'Relief', 1]]) +
                col('w-8', [['junction', 'Junction', 1], ['tab', 'Tab', 1], ['split', 'Split', 1]]) +
                col('w-[31px]', [['dissolve', 'Dissolve'], ['delete', 'Delete'], ['explode', 'Explode']])) +
            group('w-[68px]', 'Edit',
                '<i class="w-[2px]"></i>' +
                col('w-[35px]', [['extrude', 'Extrude'], ['push', 'Push/Pull'], ['move', 'Move']]) +
                col('w-[30px]', [['imprint', 'Imprint', 1], ['shell', 'Shell'], ['erase', 'Erase']])) +
            group('w-[92px]', 'Parametrize',
                big('w-9', 'smparam', 'SmParametrize') + '<i class="w-px h-7 bg-[#1f2125]"></i>' +
                icons('w-[10px]', [['p1'], ['p6'], ['p10']]) + icons('w-[10px]', [['p2'], ['p7'], ['p10']]) +
                icons('w-[10px]', [['p3'], ['p4'], ['p4']]) + icons('w-[10px]', [['p4'], ['p8'], ['lock']]) +
                icons('w-3', [['p5', 1], ['p9', 1], ['p11', 1]])) +
            group('w-[46px]', 'Select',
                '<i class="w-[2px]"></i>' +
                icons('w-[14px]', [['s1', 1], ['s2', 1], ['s3']]) + icons('w-[14px]', [['s4', 1], ['s4'], ['s4', 1]]) +
                icons('w-[14px]', [['s5', 1], ['s6'], ['s5']])) +
            group('w-[53px]', 'Heal',
                big('w-5', 'repair', 'Repair', down) +
                col('w-8', [['simplify', 'Simplify'], ['stitch', 'Stitch'], ['audit', 'Audit']])) +
            group('w-9', 'Flatten', big('w-full', 'unfold', 'Unfold/Export', down)) +
            '<section class="w-[22px] flex flex-col">' +
                '<button class="h-7 bg-[#34475c] border border-[#3b76b5] flex flex-col items-center text-center text-[#dfe3e8]">' +
                ico('colorf', 'size-[14px]') + '<span>Color<br>Features</span></button>' +
                '<h2 class="h-2 leading-2 text-center font-semibold text-[#d4d5d7]">View</h2></section>';

        // Structure tree
        $('treeTools').innerHTML = ['t1', 't2', 't3'].map(quickBtn).join('') + '<i class="w-px h-2 mx-px bg-[#45484d]"></i>' +
            quickBtn('gear') + '<i class="w-px h-2 mx-px bg-[#45484d]"></i>' + quickBtn('binoc');
        const minus = '<svg class="size-1 shrink-0" viewBox="0 0 8 8"><path d="M0 0h8v8H0z" fill="#eee"/><path d="M2 4h4" stroke="#333"/></svg>';
        const rows = [
            ...[1, 2, 3, 4, 5, 6, 7, 8].map(n => ['fl', 'Flange_' + n]),
            ...[1, 2].map(n => ['cr', 'CornerRelief_' + n]),
            ...[1, 2, 3].map(n => ['bd', 'Bend_' + n]),
            ...[1, 2].map(n => ['jn', 'Junction_' + n])
        ];
        $('tree').innerHTML = `<div class="h-[150px] flex flex-col text-[#d0d1d3]">
            <li class="flex-1 flex items-center gap-[5px] font-bold text-[#e8e8e8]">${minus}<span class="flex items-center gap-px">${ico('asm', 'size-[7px]')}2_Automatic_junctions</span></li>
            <li class="flex-1 flex items-center gap-[5px] pl-[6px]">${minus}<span class="flex items-center gap-px">${ico('folder', 'size-[7px]')}Bodies</span></li>
            ${[1, 2].map(n => `<li class="flex-1 flex items-center gap-px pl-2"><i class="w-3 h-2 border-l border-b border-[#46484c] -translate-y-1 mr-px"></i>${ico('cube', 'size-[7px]')}Body_${n}</li>`).join('')}
            ${rows.map(([id, t]) => `<li class="flex-1 flex items-center pl-[2px]"><i class="w-3 h-2 border-l border-b border-[#46484c] -translate-y-1 mr-px"></i>${ico(id, 'size-[7px]')}<span class="px-px ${t === 'Junction_2' ? 'bg-[#0a78d7] text-white' : ''}">${t}</span></li>`).join('')}
        </div>`;

        // Properties table
        $('props').innerHTML = [['Name', 'Junction_2'], ['Junction gap', '0.003'], ['Type', 'Use global value'], ['Connection type', 'Symmetric'], ['Junction alignment', 'Use global value']]
            .map(([k, v]) => `<tr>
                <td class="p-0 pl-px">${k === 'Junction gap' ? minus : ''}</td>
                <th scope="row" class="p-0 pt-px font-normal text-left border-b border-r border-[#1f2125] ${k === 'Type' ? 'pl-[7px]' : ''}">${k}</th>
                <td class="p-0 pt-px pl-px border-b border-[#1f2125] ${v === '0.003' ? 'text-[#6b6d70]' : ''}">${v}</td></tr>`).join('');

        // Layout tabs
        $('layouts').innerHTML = ['first', 'prev', 'next', 'last', 'menu']
            .map(id => `<button aria-label="${id}" class="size-[6px] mr-px bg-[#17191d] border border-[#45484d] flex items-center justify-center text-white">${ico(id, 'size-1')}</button>`).join('') +
            '<button class="w-4 bg-[#56606c] text-white font-bold">Model</button><button class="w-[22px]">Layout1</button><button class="w-[22px]">Layout2</button><button class="w-2">+</button>';

        // Status bar: label, width, state
        $('status').innerHTML = `<span class="mr-[2px]">131.95, -185.48, 0</span>` + [
            ['Standard', 'w-[22px]'], ['ISO-25', 'w-[18px]'], ['Mechanical', 'w-[26px]'],
            ['SNAP', 'w-[15px]', 'off'], ['GRID', 'w-[14px]', 'off'], ['ORTHO', 'w-5', 'off'], ['POLAR', 'w-4', 'off'],
            ['ESNAP', 'w-[17px]', 'on'], ['STRACK', 'w-5', 'on'], ['LWT', 'w-[13px]', 'off'], ['TILE', 'w-[13px]'], ['1:4', 'w-[10px]'],
            ['DUCS', 'w-[14px]', 'on'], ['DYN', 'w-[13px]', 'on'], ['QUAD', 'w-4', 'on'], ['RT', 'w-[9px]', 'on'], ['HKA', 'w-3', 'on'],
            ['LOCKUI', 'w-[19px]', 'off'], ['None', 'w-[14px]']
        ].map(([t, w, s]) => `<button class="${w} h-[7px] leading-[7px] border-l border-[#55585d] flex justify-center"><span class="${s === 'on' ? 'bg-[#474a50] text-[#e8e8e8]' : s === 'off' ? 'text-[#44474c]' : 'text-[#d0d1d3]'}">${t}</span></button>`).join('') +
            '<i class="size-[6px] ml-[2px] rounded-full bg-[#f5a623]"></i><span class="ml-[6px] mr-4">' + caret + '</span><span>◢</span>';
    </script>
</body>
</html>
